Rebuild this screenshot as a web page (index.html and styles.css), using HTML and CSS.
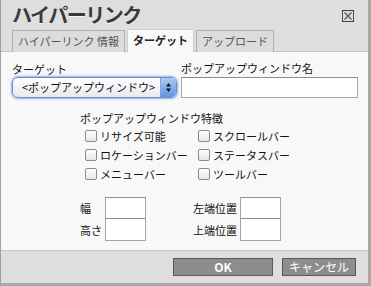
FILE: index.html
```html
<!DOCTYPE html>
<html lang="ja">
<head>
<meta charset="utf-8">
<link rel="stylesheet" href="styles.css">
</head>
<body>
<div class="dialog">
  <div class="head">
    <div class="titlerow">
      <h1 class="title">ハイパーリンク</h1>
      <span class="close"><svg width="12" height="12" viewBox="0 0 12 12"><rect x="0.5" y="0.5" width="11" height="11" fill="none" stroke="#444"/><path d="M2.5 2.5 L9.5 9.5 M9.5 2.5 L2.5 9.5" stroke="#555" stroke-width="1.3"/></svg></span>
    </div>
    <div class="tabs">
      <div class="tab">ハイパーリンク 情報</div>
      <div class="tab active">ターゲット</div>
      <div class="tab">アップロード</div>
    </div>
  </div>
  <div class="body">
    <div class="row1">
      <div class="field f-target">
        <label class="lbl">ターゲット</label>
        <div class="selwrap">
          <div class="sel">&lt;ポップアップウィンドウ&gt;</div>
          <span class="selbtn"><svg width="7" height="11" viewBox="0 0 7 11"><path d="M3.5 1 L6 4.5 L1 4.5 Z M3.5 10 L6 6.5 L1 6.5 Z" fill="#111"/></svg></span>
        </div>
      </div>
      <div class="field f-name">
        <label class="lbl">ポップアップウィンドウ名</label>
        <input class="txt name" type="text">
      </div>
    </div>
    <div class="feat">
      <div class="featlbl">ポップアップウィンドウ特徴</div>
      <div class="checks">
        <label class="chk"><span class="box"></span>リサイズ可能</label>
        <label class="chk"><span class="box"></span>スクロールバー</label>
        <label class="chk"><span class="box"></span>ロケーションバー</label>
        <label class="chk"><span class="box"></span>ステータスバー</label>
        <label class="chk"><span class="box"></span>メニューバー</label>
        <label class="chk"><span class="box"></span>ツールバー</label>
      </div>
    </div>
    <div class="dims">
      <div class="dimcol">
        <div class="dimrow"><span class="dl w1">幅</span><input class="txt small" type="text"></div>
        <div class="dimrow"><span class="dl w1">高さ</span><input class="txt small" type="text"></div>
      </div>
      <div class="dimcol">
        <div class="dimrow"><span class="dl w2">左端位置</span><input class="txt small" type="text"></div>
        <div class="dimrow"><span class="dl w2">上端位置</span><input class="txt small" type="text"></div>
      </div>
    </div>
  </div>
  <div class="foot">
    <button class="btn ok">OK</button>
    <button class="btn cancel">キャンセル</button>
  </div>
</div>
</body>
</html>
```
FILE: styles.css
```css
* { box-sizing: border-box; }
html, body { margin: 0; padding: 0; }
body {
  width: 371px; height: 286px; overflow: hidden;
  font-family: "Noto Sans CJK JP", "Liberation Sans", sans-serif;
  background: #a8a8a8;
}
.dialog {
  width: 371px; height: 286px;
  border-left: 1px solid #a0a0a0;
  border-right: 3px solid #a8a8a8;
  border-bottom: 3px solid #a8a8a8;
  display: flex; flex-direction: column;
  background: #dedede;
}
.head { background: #dedede; height: 52px; border-bottom: 1px solid #c4c4c4; display: flex; flex-direction: column; }
.titlerow { height: 29px; display: flex; justify-content: space-between; align-items: flex-start; padding: 0 14px 0 11px; }
.title { margin: 0; font-size: 20px; font-weight: 700; color: #3a3a3a; line-height: 29px; letter-spacing: -1.5px; text-shadow: 0 1px 0 #f4f4f4; }
.close { margin-top: 10px; width: 12px; height: 12px; display: block; }
.close svg { display: block; }
.tabs { display: flex; padding-left: 11px; gap: 2px; align-items: flex-end; height: 23px; }
.tab {
  height: 23px; margin-bottom: -1px;
  border: 1px solid #b0b0b0; border-bottom: 1px solid #c4c4c4;
  background: #dcdcdc; color: #555; font-size: 11px;
  padding: 0 5px; line-height: 21px;
}
.tab.active { background: #f8f8f8; color: #222; font-weight: 700; height: 24px; border-color: #cfcfcf; border-bottom-color: #f8f8f8; }
.body { background: #f8f8f8; flex: 1; padding: 8px 11px 0 11px; }
.row1 { display: flex; gap: 4px; }
.field { display: flex; flex-direction: column; }
.lbl { font-size: 11px; line-height: 17px; color: #111; }
.f-target .lbl { margin-top: 2px; line-height: 15px; }
.f-name { flex: 1; }
.selwrap { position: relative; width: 165px; height: 21px; }
.sel {
  height: 21px; width: 165px; border-radius: 6px;
  border: 1px solid #6e8fc4;
  box-shadow: 0 0 2px 1px #8fb3e8;
  background: linear-gradient(#ffffff, #e9e9ee);
  font-size: 11px; line-height: 19px; padding-left: 9px; color: #111;
}
.selbtn {
  position: absolute; right: 1px; top: 1px; width: 16px; height: 19px;
  border-radius: 0 5px 5px 0;
  background: linear-gradient(#a9c9f4, #5f95de);
  display: flex; align-items: center; justify-content: center;
  border-left: 1px solid #7fa6da;
}
.selbtn svg { display: block; }
.txt { border: 1px solid #a6a6a6; border-top-color: #8c8c8c; background: #fff; margin: 0; padding: 0; font: inherit; }
.name { height: 21px; width: 177px; }
.feat { padding-left: 68px; margin-top: 13px; }
.featlbl { font-size: 11px; line-height: 14px; color: #111; }
.checks { display: grid; grid-template-columns: 113px auto; row-gap: 3px; margin-top: 3px; padding-left: 5px; }
.chk { display: flex; align-items: center; font-size: 11px; line-height: 16px; color: #111; height: 16px; }
.box {
  width: 12px; height: 12px; border: 1px solid #8a8a8a; border-radius: 2px;
  background: linear-gradient(#ffffff, #e6e6e6); margin-right: 3px; flex: none;
}
.dims { display: flex; padding-left: 68px; margin-top: 15px; }
.dimcol { display: flex; flex-direction: column; }
.dimcol + .dimcol { margin-left: 47px; }
.dimrow { display: flex; align-items: center; height: 22px; }
.dl { font-size: 11px; color: #111; }
.w1 { width: 25px; }
.w2 { width: 47px; }
.small { width: 41px; height: 22px; }
.dimrow + .dimrow .small { margin-top: -1px; height: 23px; }
.foot {
  height: 33px; background: #dedede; border-top: 1px solid #c8c8c8;
  display: flex; justify-content: flex-end; align-items: flex-start; padding: 7px 12px 0 0; gap: 9px;
}
.btn {
  height: 18px; background: #8d8d8d; border: 1px solid #5f5a48; color: #fff;
  font-family: "Noto Sans CJK JP", "Liberation Sans", sans-serif; font-size: 12px; font-weight: 700;
  line-height: 14px; padding: 0; margin: 0;
}
.cancel { font-weight: 400; }
.ok { width: 100px; }
.cancel { width: 74px; }
```
